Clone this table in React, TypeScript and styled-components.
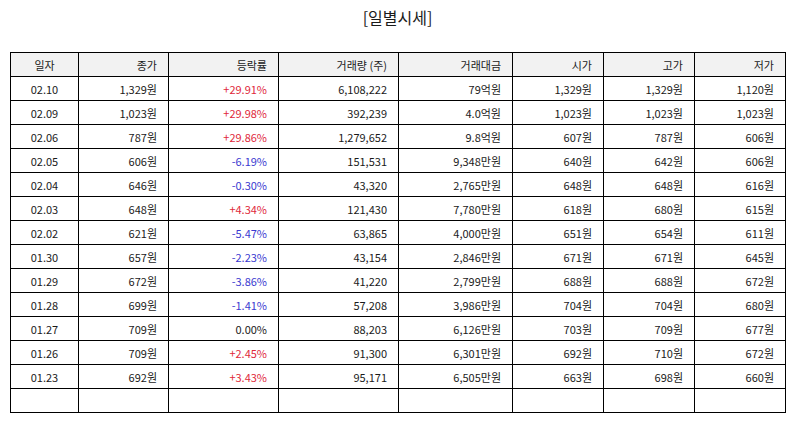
import styled, { createGlobalStyle } from "styled-components";

const Global = createGlobalStyle`
  body {
    margin: 0;
    background: #fff;
    font-family: "Noto Sans CJK KR", "Noto Sans", sans-serif;
  }
`;

const Page = styled.div`
  width: 794px;
  height: 425px;
  padding: 0 9px 0 10px;
  box-sizing: border-box;
`;

const Title = styled.h2`
  margin: 0;
  padding-top: 5px;
  height: 52px;
  box-sizing: border-box;
  text-align: center;
  font-size: 16px;
  font-weight: 400;
  line-height: 24px;
  color: #1a1a1a;
`;

const Table = styled.table`
  width: 775px;
  border-collapse: collapse;
  table-layout: fixed;
  font-size: 11px;
  color: #1a1a1a;
`;

const Th = styled.th<{ $center?: boolean }>`
  height: 23px;
  padding: 0 11px;
  border: 1px solid #000;
  background: #f2f2f2;
  font-weight: 400;
  text-align: ${(p) => (p.$center ? "center" : "right")};
`;

const Td = styled.td<{ $center?: boolean; $tone?: "up" | "down" | "flat" }>`
  height: 23px;
  padding: 0 11px;
  border: 1px solid #000;
  text-align: ${(p) => (p.$center ? "center" : "right")};
  color: ${(p) =>
    p.$tone === "up" ? "#e0283a" : p.$tone === "down" ? "#3a3ad0" : "#1a1a1a"};
  white-space: nowrap;
`;

const widths = [68, 90, 110, 120, 114, 91, 91, 91];
const headers = ["일자", "종가", "등락률", "거래량 (주)", "거래대금", "시가", "고가", "저가"];

type Row = [string, string, string, string, string, string, string, string];

const rows: Row[] = [
  ["02.10", "1,329원", "+29.91%", "6,108,222", "79억원", "1,329원", "1,329원", "1,120원"],
  ["02.09", "1,023원", "+29.98%", "392,239", "4.0억원", "1,023원", "1,023원", "1,023원"],
  ["02.06", "787원", "+29.86%", "1,279,652", "9.8억원", "607원", "787원", "606원"],
  ["02.05", "606원", "-6.19%", "151,531", "9,348만원", "640원", "642원", "606원"],
  ["02.04", "646원", "-0.30%", "43,320", "2,765만원", "648원", "648원", "616원"],
  ["02.03", "648원", "+4.34%", "121,430", "7,780만원", "618원", "680원", "615원"],
  ["02.02", "621원", "-5.47%", "63,865", "4,000만원", "651원", "654원", "611원"],
  ["01.30", "657원", "-2.23%", "43,154", "2,846만원", "671원", "671원", "645원"],
  ["01.29", "672원", "-3.86%", "41,220", "2,799만원", "688원", "688원", "672원"],
  ["01.28", "699원", "-1.41%", "57,208", "3,986만원", "704원", "704원", "680원"],
  ["01.27", "709원", "0.00%", "88,203", "6,126만원", "703원", "709원", "677원"],
  ["01.26", "709원", "+2.45%", "91,300", "6,301만원", "692원", "710원", "672원"],
  ["01.23", "692원", "+3.43%", "95,171", "6,505만원", "663원", "698원", "660원"],
];

function toneOf(rate: string): "up" | "down" | "flat" {
  if (rate.startsWith("+")) return "up";
  if (rate.startsWith("-")) return "down";
  return "flat";
}

export default function App() {
  return (
    <Page>
      <Global />
      <Title>[일별시세]</Title>
      <Table>
        <colgroup>
          {widths.map((w, i) => (
            <col key={i} style={{ width: w }} />
          ))}
        </colgroup>
        <thead>
          <tr>
            {headers.map((h, i) => (
              <Th key={h} $center={i === 0}>
                {h}
              </Th>
            ))}
          </tr>
        </thead>
        <tbody>
          {rows.map((r) => (
            <tr key={r[0]}>
              {r.map((c, i) => (
                <Td key={i} $center={i === 0} $tone={i === 2 ? toneOf(c) : undefined}>
                  {c}
                </Td>
              ))}
            </tr>
          ))}
          <tr>
            {widths.map((_, i) => (
              <Td key={i} />
            ))}
          </tr>
        </tbody>
      </Table>
    </Page>
  );
}
